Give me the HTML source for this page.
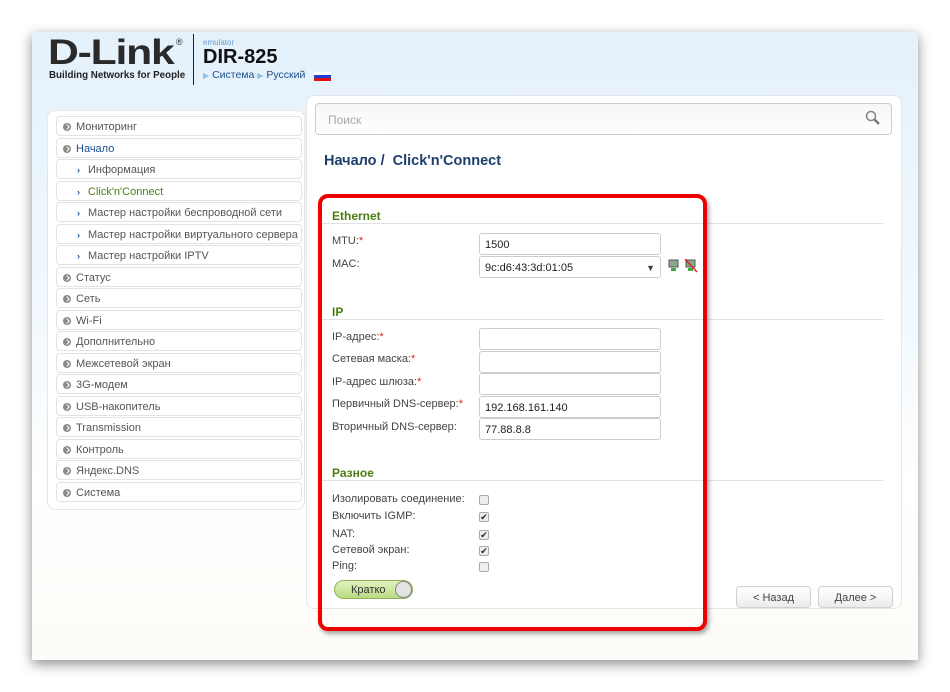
<!DOCTYPE html>
<html><head><meta charset="utf-8"><style>
*{box-sizing:border-box;margin:0;padding:0}
body{width:950px;height:692px;background:#fff;position:relative;overflow:hidden;font-family:"Liberation Sans",Arial,sans-serif;font-size:11px;color:#555}
.win{position:absolute;left:32px;top:32px;width:886px;height:628px;background:linear-gradient(#e4f1fb 0,#f3f9fd 300px,#fff 450px,#fdfcf8 628px);box-shadow:0 4px 12px rgba(0,0,0,.45)}
.a{position:absolute}
.side{left:47px;top:110px;width:258px;height:400px;background:#fff;border:1px solid #e6e6e6;border-radius:8px}
.it{position:absolute;left:56px;width:246px;height:20px;border:1px solid #e3e3e3;border-radius:4px;background:#fff;line-height:21px;padding-left:19px;color:#555}
.it i{position:absolute;left:6px;top:6px;width:8px;height:8px;border-radius:50%;background:#8a8a8a}
.it i:after{content:"";position:absolute;left:2px;top:2px;width:3px;height:3px;border-right:1px solid #fff;border-top:1px solid #fff;transform:rotate(45deg)}
.it.sub{padding-left:31px}
.it.sub b{position:absolute;left:20px;top:0;color:#1b4f8f;font-size:9px}
.main{left:306px;top:95px;width:596px;height:514px;background:#fff;border:1px solid #e6e6e6;border-radius:8px}
.lbl{position:absolute;left:332px;color:#444;margin-top:3px}
.lbl s{text-decoration:none;color:#e02020}
.inp{position:absolute;left:479px;width:182px;height:22px;border:1px solid #ccc;border-radius:3px;background:#fff;padding-left:5px;line-height:22px;color:#222}
.h{position:absolute;left:332px;color:#4a7d12;font-weight:bold;font-size:12px;margin-top:1px}
.ln{position:absolute;left:320px;width:563px;height:1px;background:#e2e2e2}
.cb{position:absolute;left:479px;width:10px;height:10px;border:1px solid #aaa;border-radius:2px;background:#eee;font-size:9px;line-height:8px;text-align:center;color:#222}
.btn{position:absolute;top:586px;height:22px;border:1px solid #d0d0d0;border-radius:4px;background:linear-gradient(#fff,#ececec);text-align:center;line-height:22px;color:#444}
</style></head><body>
<div class="win"></div>
<div class="a" style="left:48px;top:35px;font:bold 35px/1 'Liberation Sans',sans-serif;color:#2a2a2a;letter-spacing:-1px;transform:scaleX(1.22);transform-origin:left">D-Link</div>
<div class="a" style="left:176px;top:37px;font-size:9px;color:#222">®</div>
<div class="a" style="left:49px;top:69px;font-size:10.5px;font-weight:bold;color:#222;transform:scaleX(0.93);transform-origin:left">Building Networks for People</div>
<div class="a" style="left:193px;top:34px;width:1px;height:51px;background:#222"></div>
<div class="a" style="left:203px;top:38px;font-size:8px;color:#6a9ac8">emulator</div>
<div class="a" style="left:203px;top:46px;font-size:20px;font-weight:bold;color:#111">DIR-825</div>
<div class="a" style="left:203px;top:69px;font-size:10.5px;color:#1b4f8f"><span style="color:#8ec0e4;font-size:8px">▶</span> Система <span style="color:#8ec0e4;font-size:8px">▶</span> Русский</div>
<div class="a" style="left:314px;top:72px;width:17px;height:9px;background:linear-gradient(#fff 0 33%,#1f3fd0 33% 66%,#e01010 66%)"></div>

<div class="a side"></div>
<div class="it" style="top:116px"><i></i>Мониторинг</div>
<div class="it" style="top:137.5px;color:#1b4f8f"><i></i>Начало</div>
<div class="it sub" style="top:159px"><b>›</b>Информация</div>
<div class="it sub" style="top:180.5px;color:#4a7d12"><b>›</b>Click'n'Connect</div>
<div class="it sub" style="top:202px"><b>›</b>Мастер настройки беспроводной сети</div>
<div class="it sub" style="top:223.5px"><b>›</b>Мастер настройки виртуального сервера</div>
<div class="it sub" style="top:245px"><b>›</b>Мастер настройки IPTV</div>
<div class="it" style="top:266.5px"><i></i>Статус</div>
<div class="it" style="top:288px"><i></i>Сеть</div>
<div class="it" style="top:309.5px"><i></i>Wi-Fi</div>
<div class="it" style="top:331px"><i></i>Дополнительно</div>
<div class="it" style="top:352.5px"><i></i>Межсетевой экран</div>
<div class="it" style="top:374px"><i></i>3G-модем</div>
<div class="it" style="top:395.5px"><i></i>USB-накопитель</div>
<div class="it" style="top:417px"><i></i>Transmission</div>
<div class="it" style="top:438.5px"><i></i>Контроль</div>
<div class="it" style="top:460px"><i></i>Яндекс.DNS</div>
<div class="it" style="top:481.5px"><i></i>Система</div>

<div class="a main"></div>
<div class="a" style="left:315px;top:103px;width:577px;height:32px;border:1px solid #ccc;border-radius:4px;background:linear-gradient(#f6f6f6,#fff);padding-left:12px;line-height:33px;color:#aaa;font-size:12px">Поиск</div>
<svg class="a" style="left:864px;top:109px" width="18" height="18"><circle cx="7" cy="7" r="4.5" fill="none" stroke="#888" stroke-width="1.6"/><line x1="10.5" y1="10.5" x2="15" y2="15" stroke="#777" stroke-width="2.5"/></svg>
<div class="a" style="left:324px;top:153px;font-size:14.5px;font-weight:bold;color:#1b3e6a">Начало /&nbsp; Click'n'Connect</div>

<div class="h" style="top:208px">Ethernet</div><div class="ln" style="top:223px"></div>
<div class="lbl" style="top:232px">MTU:<s>*</s></div><div class="inp" style="top:233px">1500</div>
<div class="lbl" style="top:255px">MAC:</div><div class="inp" style="top:256px">9c:d6:43:3d:01:05<span style="position:absolute;right:5px;font-size:9px;color:#444">▼</span></div>
<svg class="a" style="left:668px;top:259px" width="30" height="14"><rect x="1" y="1" width="9" height="7" fill="#8a8" stroke="#555"/><rect x="3" y="9" width="5" height="3" fill="#4a4"/><rect x="18" y="1" width="9" height="7" fill="#8a8" stroke="#555"/><rect x="20" y="9" width="5" height="3" fill="#4a4"/><line x1="17" y1="0" x2="29" y2="13" stroke="#e02020" stroke-width="1.5"/></svg>

<div class="h" style="top:304px">IP</div><div class="ln" style="top:319px"></div>
<div class="lbl" style="top:328px">IP-адрес:<s>*</s></div><div class="inp" style="top:328px"></div>
<div class="lbl" style="top:350px">Сетевая маска:<s>*</s></div><div class="inp" style="top:350.5px"></div>
<div class="lbl" style="top:373px">IP-адрес шлюза:<s>*</s></div><div class="inp" style="top:373px"></div>
<div class="lbl" style="top:395px">Первичный DNS-сервер:<s>*</s></div><div class="inp" style="top:395.5px">192.168.161.140</div>
<div class="lbl" style="top:418px">Вторичный DNS-сервер:</div><div class="inp" style="top:418px">77.88.8.8</div>

<div class="h" style="top:465px">Разное</div><div class="ln" style="top:480px"></div>
<div class="lbl" style="top:490px">Изолировать соединение:</div><div class="cb" style="top:495px"></div>
<div class="lbl" style="top:507px">Включить IGMP:</div><div class="cb" style="top:512px">✔</div>
<div class="lbl" style="top:525px">NAT:</div><div class="cb" style="top:530px">✔</div>
<div class="lbl" style="top:541px">Сетевой экран:</div><div class="cb" style="top:546px">✔</div>
<div class="lbl" style="top:557px">Ping:</div><div class="cb" style="top:562px"></div>
<div class="a" style="left:334px;top:580px;width:79px;height:19px;border:1px solid #8eb35a;border-radius:10px;background:linear-gradient(#e2f2bf,#b8db82);line-height:19px;padding-left:16px;color:#333">Кратко</div>
<div class="a" style="left:395px;top:581px;width:17px;height:17px;border:1px solid #888;border-radius:50%;background:#e4e4e4"></div>

<div class="btn" style="left:736px;width:75px">&lt; Назад</div>
<div class="btn" style="left:818px;width:75px">Далее &gt;</div>

<div class="a" style="left:318px;top:194px;width:389px;height:437px;border:4px solid #ee0000;border-radius:10px;box-shadow:2px 3px 5px rgba(0,0,0,.35)"></div>
</body></html>
